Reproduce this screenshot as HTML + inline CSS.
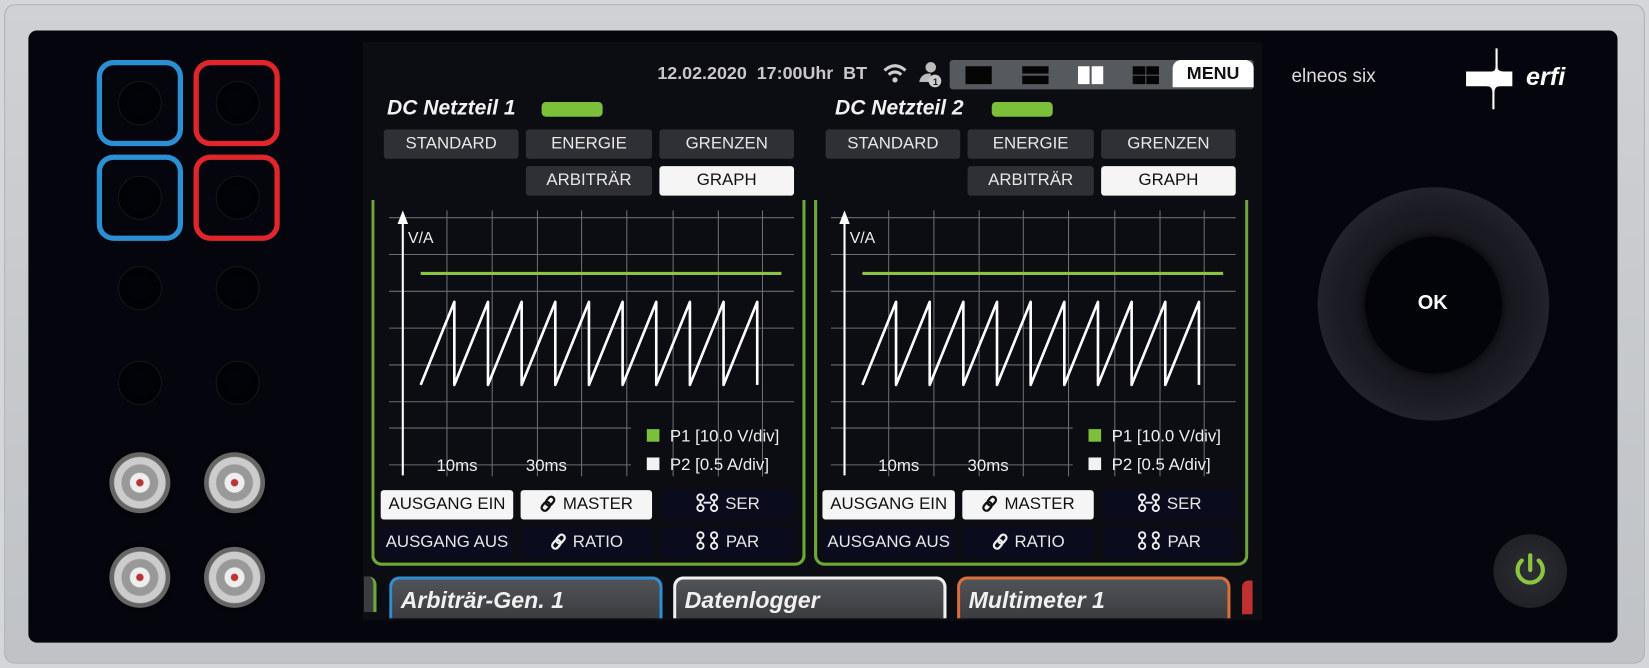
<!DOCTYPE html>
<html><head><meta charset="utf-8"><style>
*{margin:0;padding:0;box-sizing:border-box}
html,body{width:1649px;height:668px;overflow:hidden}
body{background:#d4d6d9;position:relative;font-family:"Liberation Sans","DejaVu Sans",sans-serif;color:#e8e8e8}
#wrap{position:absolute;left:0;top:0;width:1568px;height:635px;transform:scale(1.0517);transform-origin:0 0}
.abs{position:absolute}
.bezel{left:4px;top:4px;width:1560px;height:627px;background:linear-gradient(#cfd1d4,#bfc2c6);border-radius:10px;border:1px solid #aeb1b5}
.panel{left:27px;top:29px;width:1511px;height:582px;background:#05060d;border-radius:8px}
.screen{left:345px;top:40px;width:855px;height:550px;background:#0b0d13}
.btn{position:absolute;height:28px;border-radius:3px;background:#2e3036;color:#e6e6e6;font-size:16px;text-align:center;line-height:28px}
.w{background:#f5f5f5;color:#111}
.d{background:#0a0b1c}
.title{position:absolute;font-style:italic;font-weight:bold;font-size:20px;color:#f2f2f2}
.led{position:absolute;width:58px;height:14px;background:#7bbf3a;border-radius:4px}
.box{position:absolute;border:3px solid #6fa83a;border-top:none;border-radius:0 0 10px 10px}
.tab{position:absolute;top:548px;height:40px;width:260px;border-radius:10px 10px 0 0;background:linear-gradient(#505357,#3a3c40);border:3px solid;border-bottom:none;font-style:italic;font-weight:bold;font-size:22px;color:#f0f0f0;padding-left:8px;line-height:40px}
.jack{position:absolute;border-radius:50%;background:#020308;border:1px solid #15161c;box-shadow:inset 0 0 6px #000}
.bnc{position:absolute;width:58px;height:58px;border-radius:50%;background:radial-gradient(circle,#b33 0 3px,#eee 4px 9px,#999 10px 17px,#ccc 18px 24px,#666 25px 29px);box-shadow:0 0 4px #000}
.sq{position:absolute;width:82px;height:82px;border-radius:16px;border:5px solid}
.ic{vertical-align:-3px;margin-right:6px}
</style></head><body><div id="wrap">
<div class="abs bezel"></div>
<div class="abs panel"></div>

<div class="sq" style="left:92px;top:57px;border-color:#2b8fd4"></div>
<div class="sq" style="left:92px;top:147px;border-color:#2b8fd4"></div>
<div class="sq" style="left:184px;top:57px;border-color:#e0262a"></div>
<div class="sq" style="left:184px;top:147px;border-color:#e0262a"></div>
<div class="jack" style="left:112px;top:77px;width:42px;height:42px"></div>
<div class="jack" style="left:205px;top:77px;width:42px;height:42px"></div>
<div class="jack" style="left:112px;top:167px;width:42px;height:42px"></div>
<div class="jack" style="left:205px;top:167px;width:42px;height:42px"></div>
<div class="jack" style="left:112px;top:253px;width:42px;height:42px"></div>
<div class="jack" style="left:205px;top:253px;width:42px;height:42px"></div>
<div class="jack" style="left:112px;top:343px;width:42px;height:42px"></div>
<div class="jack" style="left:205px;top:343px;width:42px;height:42px"></div>
<div class="bnc" style="left:104px;top:430px"></div>
<div class="bnc" style="left:194px;top:430px"></div>
<div class="bnc" style="left:104px;top:520px"></div>
<div class="bnc" style="left:194px;top:520px"></div>

<div class="abs screen"></div>
<div class="abs" style="left:625px;top:60px;font-size:17px;color:#c8c8c8;font-weight:bold">12.02.2020&nbsp;&nbsp;17:00Uhr&nbsp;&nbsp;BT</div>
<svg class="abs" style="left:838px;top:56px" width="60" height="30"><g fill="none" stroke="#ccc" stroke-width="3"><path d="M3 11 Q13 2 23 11"/><path d="M7 15 Q13 10 19 15"/></g><circle cx="13" cy="20" r="2.5" fill="#ccc"/><circle cx="47" cy="8" r="5" fill="#bbb"/><path d="M36 22 Q38 13 47 14 L47 22Z" fill="#bbb"/><circle cx="51" cy="21" r="6" fill="#ccc"/><text x="49" y="25" font-size="9" font-weight="bold" fill="#222" font-family="Liberation Sans">1</text></svg>
<div class="abs" style="left:903px;top:57px;width:289px;height:28px;background:#56595d;border-radius:3px"></div>
<div class="abs" style="left:918px;top:63px;width:25px;height:17px;background:#050505"></div>
<div class="abs" style="left:972px;top:63px;width:25px;height:7px;background:#050505"></div>
<div class="abs" style="left:972px;top:72px;width:25px;height:8px;background:#050505"></div>
<div class="abs" style="left:1025px;top:63px;width:11px;height:17px;background:#fff"></div>
<div class="abs" style="left:1038px;top:63px;width:11px;height:17px;background:#fff"></div>
<div class="abs" style="left:1077px;top:63px;width:12px;height:8px;background:#050505;box-shadow:13px 0 #050505,0 9px #050505,13px 9px #050505"></div>
<div class="abs" style="left:1115px;top:57px;width:77px;height:26px;background:#fff;border-radius:8px 8px 0 0;color:#111;font-weight:bold;font-size:17px;text-align:center;line-height:26px">MENU</div>

<!-- Panel 1 -->
<div class="box" style="left:353px;top:190px;width:413px;height:348px"></div>
<div class="title" style="left:368px;top:92px">DC Netzteil 1</div>
<div class="led" style="left:515px;top:97px"></div>
<div class="btn" style="left:365px;top:123px;width:128px">STANDARD</div>
<div class="btn" style="left:500px;top:123px;width:120px">ENERGIE</div>
<div class="btn" style="left:627px;top:123px;width:128px">GRENZEN</div>
<div class="btn" style="left:500px;top:158px;width:120px">ARBITRÄR</div>
<div class="btn w" style="left:627px;top:158px;width:128px">GRAPH</div>
<svg class="abs" style="left:365px;top:195px" width="395" height="265">
<g stroke="#6a6d72" stroke-width="1"><path d="M60 5V258M103 5V258M146 5V258M188 5V258M231 5V258M275 5V258M318 5V258M360 5V258"/><path d="M5 12H390M5 47H390M5 82H390M5 117H390M5 152H390M5 187H390M5 212H235M5 247H235"/></g>
<path d="M18 257V12" stroke="#fff" stroke-width="2"/><path d="M13 18L18 5L23 18Z" fill="#fff"/>
<text x="23" y="36" fill="#eee" font-size="15" font-family="Liberation Sans">V/A</text>
<path d="M35 65H378" stroke="#8cc43f" stroke-width="3"/>
<path d="M35 171L67 92V171L99 92V171L131 92V171L163 92V171L195 92V171L227 92V171L259 92V171L291 92V171L323 92V171L355 92V171" fill="none" stroke="#fff" stroke-width="2.5" stroke-linejoin="round"/>
<text x="50" y="253" fill="#eee" font-size="16" font-family="Liberation Sans">10ms</text>
<text x="135" y="253" fill="#eee" font-size="16" font-family="Liberation Sans">30ms</text>
<rect x="250" y="213" width="12" height="12" fill="#7bbf3a"/><text x="272" y="225" fill="#eee" font-size="16" font-family="Liberation Sans">P1 [10.0 V/div]</text>
<rect x="250" y="240" width="12" height="12" fill="#f2f2f2"/><text x="272" y="252" fill="#eee" font-size="16" font-family="Liberation Sans">P2 [0.5 A/div]</text>
</svg>
<div class="btn w" style="left:362px;top:466px;width:126px">AUSGANG EIN</div>
<div class="btn w" style="left:495px;top:466px;width:125px"><svg class="ic" width="16" height="16"><g fill="none" stroke="#111" stroke-width="2.2"><rect x="7" y="1" width="6" height="9" rx="3" transform="rotate(40 10 5.5)"/><rect x="3" y="6" width="6" height="9" rx="3" transform="rotate(40 6 10.5)"/></g></svg>MASTER</div>
<div class="btn d" style="left:629px;top:466px;width:126px"><svg class="ic" width="22" height="18"><g fill="none" stroke="#eee" stroke-width="1.8"><circle cx="4" cy="4" r="3"/><circle cx="17" cy="4" r="3"/><circle cx="4" cy="14" r="3"/><circle cx="17" cy="14" r="3"/><path d="M4 7V11M17 7V11M7 9H14"/></g></svg>SER</div>
<div class="btn d" style="left:362px;top:502px;width:126px">AUSGANG AUS</div>
<div class="btn d" style="left:495px;top:502px;width:125px"><svg class="ic" width="16" height="16"><g fill="none" stroke="#eee" stroke-width="2.2"><rect x="7" y="1" width="6" height="9" rx="3" transform="rotate(40 10 5.5)"/><rect x="3" y="6" width="6" height="9" rx="3" transform="rotate(40 6 10.5)"/></g></svg>RATIO</div>
<div class="btn d" style="left:629px;top:502px;width:126px"><svg class="ic" width="22" height="18"><g fill="none" stroke="#eee" stroke-width="1.8"><circle cx="4" cy="4" r="3"/><circle cx="17" cy="4" r="3"/><circle cx="4" cy="14" r="3"/><circle cx="17" cy="14" r="3"/><path d="M4 7V11M17 7V11"/></g></svg>PAR</div>

<!-- Panel 2 -->
<div class="box" style="left:774px;top:190px;width:413px;height:348px"></div>
<div class="title" style="left:794px;top:92px">DC Netzteil 2</div>
<div class="led" style="left:943px;top:97px"></div>
<div class="btn" style="left:785px;top:123px;width:128px">STANDARD</div>
<div class="btn" style="left:920px;top:123px;width:120px">ENERGIE</div>
<div class="btn" style="left:1047px;top:123px;width:128px">GRENZEN</div>
<div class="btn" style="left:920px;top:158px;width:120px">ARBITRÄR</div>
<div class="btn w" style="left:1047px;top:158px;width:128px">GRAPH</div>
<svg class="abs" style="left:785px;top:195px" width="395" height="265">
<g stroke="#6a6d72" stroke-width="1"><path d="M60 5V258M103 5V258M146 5V258M188 5V258M231 5V258M275 5V258M318 5V258M360 5V258"/><path d="M5 12H390M5 47H390M5 82H390M5 117H390M5 152H390M5 187H390M5 212H235M5 247H235"/></g>
<path d="M18 257V12" stroke="#fff" stroke-width="2"/><path d="M13 18L18 5L23 18Z" fill="#fff"/>
<text x="23" y="36" fill="#eee" font-size="15" font-family="Liberation Sans">V/A</text>
<path d="M35 65H378" stroke="#8cc43f" stroke-width="3"/>
<path d="M35 171L67 92V171L99 92V171L131 92V171L163 92V171L195 92V171L227 92V171L259 92V171L291 92V171L323 92V171L355 92V171" fill="none" stroke="#fff" stroke-width="2.5" stroke-linejoin="round"/>
<text x="50" y="253" fill="#eee" font-size="16" font-family="Liberation Sans">10ms</text>
<text x="135" y="253" fill="#eee" font-size="16" font-family="Liberation Sans">30ms</text>
<rect x="250" y="213" width="12" height="12" fill="#7bbf3a"/><text x="272" y="225" fill="#eee" font-size="16" font-family="Liberation Sans">P1 [10.0 V/div]</text>
<rect x="250" y="240" width="12" height="12" fill="#f2f2f2"/><text x="272" y="252" fill="#eee" font-size="16" font-family="Liberation Sans">P2 [0.5 A/div]</text>
</svg>
<div class="btn w" style="left:782px;top:466px;width:126px">AUSGANG EIN</div>
<div class="btn w" style="left:915px;top:466px;width:125px"><svg class="ic" width="16" height="16"><g fill="none" stroke="#111" stroke-width="2.2"><rect x="7" y="1" width="6" height="9" rx="3" transform="rotate(40 10 5.5)"/><rect x="3" y="6" width="6" height="9" rx="3" transform="rotate(40 6 10.5)"/></g></svg>MASTER</div>
<div class="btn d" style="left:1049px;top:466px;width:126px"><svg class="ic" width="22" height="18"><g fill="none" stroke="#eee" stroke-width="1.8"><circle cx="4" cy="4" r="3"/><circle cx="17" cy="4" r="3"/><circle cx="4" cy="14" r="3"/><circle cx="17" cy="14" r="3"/><path d="M4 7V11M17 7V11M7 9H14"/></g></svg>SER</div>
<div class="btn d" style="left:782px;top:502px;width:126px">AUSGANG AUS</div>
<div class="btn d" style="left:915px;top:502px;width:125px"><svg class="ic" width="16" height="16"><g fill="none" stroke="#eee" stroke-width="2.2"><rect x="7" y="1" width="6" height="9" rx="3" transform="rotate(40 10 5.5)"/><rect x="3" y="6" width="6" height="9" rx="3" transform="rotate(40 6 10.5)"/></g></svg>RATIO</div>
<div class="btn d" style="left:1049px;top:502px;width:126px"><svg class="ic" width="22" height="18"><g fill="none" stroke="#eee" stroke-width="1.8"><circle cx="4" cy="4" r="3"/><circle cx="17" cy="4" r="3"/><circle cx="4" cy="14" r="3"/><circle cx="17" cy="14" r="3"/><path d="M4 7V11M17 7V11"/></g></svg>PAR</div>

<!-- tabs -->
<div class="abs" style="left:346px;top:548px;width:12px;height:34px;background:#3a3c40;border-right:3px solid #6fa83a;border-radius:0 8px 0 0"></div>
<div class="tab" style="left:370px;border-color:#2f8fd0">Arbiträr-Gen. 1</div>
<div class="tab" style="left:640px;border-color:#f0f0f0">Datenlogger</div>
<div class="tab" style="left:910px;border-color:#d8703a">Multimeter 1</div>
<div class="abs" style="left:1181px;top:552px;width:10px;height:32px;background:#c03030;border-radius:6px 0 0 0"></div>

<!-- right -->
<div class="abs" style="left:1228px;top:62px;font-size:18px;color:#ddd">elneos six</div>
<svg class="abs" style="left:1390px;top:44px" width="115" height="60">
<rect x="4" y="24" width="24" height="14" fill="#fff"/><path d="M28 24Q32 24 32 20V2H34V20Q34 24 40 24H48V38H36Q31 38 31 44V60H29V44Q29 38 24 38Z" fill="#fff"/>
<text x="61" y="37" font-size="24" font-weight="bold" fill="#fff" font-family="Liberation Sans" font-style="italic">erfi</text>
</svg>
<div class="abs" style="left:1253px;top:178px;width:220px;height:222px;border-radius:50%;background:radial-gradient(circle at 50% 50%,#191a22 55%,#24252d 75%,#15161d 100%)"></div>
<div class="abs" style="left:1298px;top:225px;width:130px;height:130px;border-radius:50%;background:#03040a;box-shadow:0 0 12px #000"></div>
<div class="abs" style="left:1348px;top:278px;font-size:19px;color:#fff;font-weight:bold">OK</div>
<div class="abs" style="left:1420px;top:508px;width:70px;height:70px;border-radius:50%;background:radial-gradient(#2d2f35,#1b1c22)"></div>
<svg class="abs" style="left:1435px;top:523px" width="40" height="40"><path d="M12 10A12 12 0 1 0 28 10" fill="none" stroke="#8cc43f" stroke-width="4" stroke-linecap="round"/><path d="M20 5V19" stroke="#8cc43f" stroke-width="4" stroke-linecap="round"/></svg>
</div></body></html>
